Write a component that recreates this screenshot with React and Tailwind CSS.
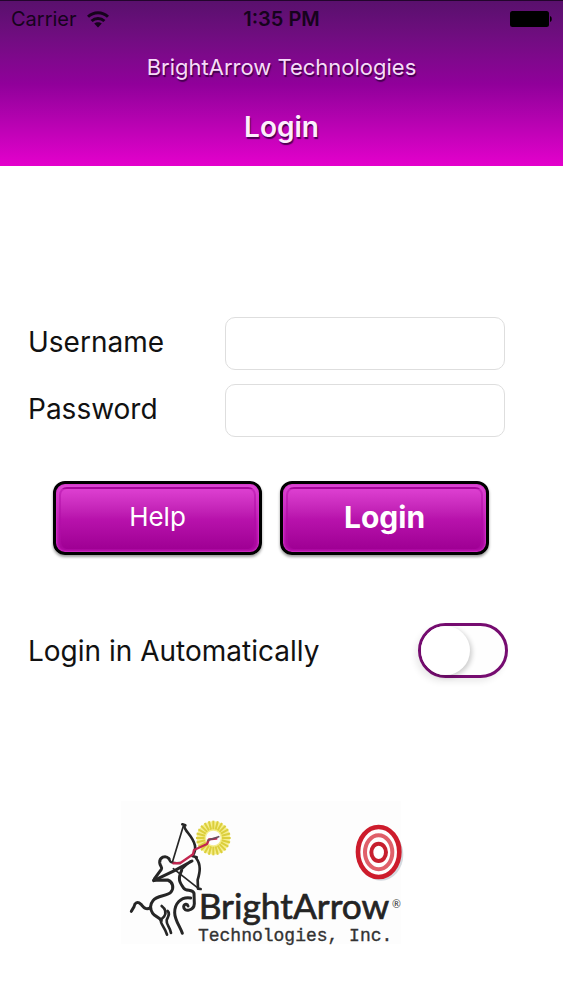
import React, { useState } from "react";

function WifiIcon() {
  return (
    <svg width="22" height="17" viewBox="0 0 22 17" fill="none" stroke="currentColor" strokeWidth="3" aria-hidden="true">
      <path d="M1 5.8C6.6 0.3 15.4 0.3 21 5.8" />
      <path d="M4.6 10C8.2 6.6 13.8 6.6 17.4 10" />
      <path d="M11 16.4L7.2 12.6C9.4 10.7 12.6 10.7 14.8 12.6Z" fill="currentColor" stroke="none" />
    </svg>
  );
}

function BatteryIcon() {
  return (
    <svg width="42" height="17" viewBox="0 0 42 17" fill="currentColor" aria-hidden="true">
      <rect x="0" y="0" width="39" height="16" rx="2.5" />
      <path d="M40 5C42.3 5.5 42.3 10.5 40 11Z" />
    </svg>
  );
}

const RAYS = Array.from({ length: 24 }, (_, i) => (i * Math.PI) / 12);

function Logo() {
  return (
    <svg className="h-auto w-[290px]" viewBox="0 0 870 440" role="img" aria-label="BrightArrow Technologies, Inc.">
      <rect x="3" y="3" width="840" height="430" fill="#fdfdfd" />
      <circle cx="280" cy="114" r="36" fill="none" stroke="#f5ee8e" strokeWidth="28" />
      <g stroke="#dccf3c" strokeWidth="6">
        {RAYS.map((a) => (
          <line
            key={a}
            x1={280 + 26 * Math.cos(a)}
            y1={114 + 26 * Math.sin(a)}
            x2={280 + 52 * Math.cos(a)}
            y2={114 + 52 * Math.sin(a)}
          />
        ))}
      </g>
      <g fill="none" stroke="#262626" strokeLinecap="round" strokeLinejoin="round">
        <path d="M187 73L196 76M192 76C194 96 217 104 225 137C227 149 224 159 217 168L230 172" strokeWidth="8" />
        <path d="M228 174C244 194 240 216 233 240L234 266L242 267" strokeWidth="8" />
        <path d="M190 78L158 184M160 206L236 266" strokeWidth="5" />
        <path d="M147 176C136 164 118 172 119 188C120 199 128 201 124 208L103 237" strokeWidth="9" />
        <path d="M147 176C150 190 163 190 180 189" strokeWidth="7" />
        <path d="M101 242L165 211L216 183" strokeWidth="9" />
        <path d="M101 241L143 240C160 246 162 265 153 276C141 290 112 285 99 302C91 312 89 326 98 340C104 350 118 350 124 362" strokeWidth="9" />
        <path d="M92 323C77 331 72 323 63 313C52 302 44 309 42 320L34 334" strokeWidth="9" />
        <path d="M125 318C138 328 140 338 132 350L123 359C118 369 135 382 141 404" strokeWidth="8" />
        <path d="M143 333C151 340 145 349 140 360C138 375 150 380 153 399" strokeWidth="8" />
        <path d="M185 211C173 237 178 246 190 263C198 277 217 265 222 280L223 311C222 333 191 338 191 320C192 312 202 310 204 318" strokeWidth="9" />
        <path d="M212 294C181 289 164 313 164 338C164 360 181 381 187 400" strokeWidth="9" />
        <path d="M184 209L212 183" strokeWidth="6" />
      </g>
      <g fill="none" strokeLinecap="round" strokeLinejoin="round">
        <path d="M160 190L181 189L219 163L222 150L261 132L267 118L289 116" stroke="#c32750" strokeWidth="7" />
        <path d="M264 121L296 110" stroke="#68505f" strokeWidth="5" />
      </g>
      <g>
        <ellipse cx="783" cy="164" rx="67" ry="78" fill="#b8c1cb" opacity="0.6" />
        <ellipse cx="776" cy="156" rx="62" ry="75" fill="#fff" stroke="#cd1c2c" strokeWidth="14" />
        <ellipse cx="776" cy="157" rx="41" ry="51" fill="none" stroke="#e0606a" strokeWidth="12" />
        <ellipse cx="776" cy="157" rx="22" ry="26" fill="none" stroke="#c71f2e" strokeWidth="12" />
      </g>
      <text x="236" y="356" fontFamily="Lato, sans-serif" fontSize="106" fill="#242424" stroke="#242424" strokeWidth="2">
        BrightArrow
      </text>
      <text x="816" y="324" fontFamily="Lato, sans-serif" fontSize="32" fill="#333">
        ®
      </text>
      <text x="234" y="424" fontFamily="'Liberation Mono', monospace" fontSize="54" fill="#333" stroke="#333" strokeWidth="1">
        Technologies, Inc.
      </text>
    </svg>
  );
}

function GlossyButton({ children, className }) {
  return (
    <button
      type="button"
      className={`h-[74px] rounded-xl border-[3px] border-black bg-linear-to-b from-[#e04ad6] via-[#bd16b1] via-55% to-[#a8069d] p-[3px] text-white shadow-[0_2px_3px_rgba(0,0,0,0.4),inset_0_0_2px_1px_#d633ca] ${className}`}
    >
      <span className="flex h-full items-center justify-center rounded-lg border-2 border-b-0 border-[#b00da6]/50 bg-linear-to-b from-[#dd3fd1] via-[#b812ac] via-50% to-[#9f0094] pb-1">
        {children}
      </span>
    </button>
  );
}

function Field({ id, label, type }) {
  return (
    <div className="flex items-center">
      <label htmlFor={id} className="w-[197px] shrink-0 pb-1">
        {label}
      </label>
      <input
        id={id}
        type={type}
        className="h-[53px] min-w-0 flex-1 rounded-[10px] border border-[#dedede] bg-white px-3 text-2xl outline-none"
      />
    </div>
  );
}

export default function App() {
  const [auto, setAuto] = useState(false);
  return (
    <div className="min-h-screen bg-white font-['Inter',sans-serif] text-[28px] leading-9 text-[#111]">
      <header className="h-[166px] border-t border-[#22052c] bg-linear-to-b from-[#59106d] via-[#90009a] via-50% to-[#e400cc]">
        <div className="grid h-9 grid-cols-3 items-center px-[11px] text-xl text-[#16031c]">
          <div className="flex items-center gap-2.5">
            <span>Carrier</span>
            <WifiIcon />
          </div>
          <span className="text-center font-semibold">1:35 PM</span>
          <span className="justify-self-end text-black">
            <BatteryIcon />
          </span>
        </div>
        <p className="mt-3 text-center text-[22px] text-[#f6dcf8] [text-shadow:1px_2px_1px_rgba(40,0,50,0.75)]">
          BrightArrow Technologies
        </p>
        <h1 className="mt-6 text-center text-[28px] font-semibold text-[#fdeefd] [text-shadow:1px_2px_1px_rgba(40,0,50,0.75)]">
          Login
        </h1>
      </header>
      <form className="pt-[151px]" onSubmit={(e) => e.preventDefault()}>
        <div className="flex flex-col gap-3.5 pr-[58px] pl-7">
          <Field id="username" label="Username" type="text" />
          <Field id="password" label="Password" type="password" />
        </div>
        <div className="mt-11 grid grid-cols-2 gap-[18px] pr-[74px] pl-[53px]">
          <GlossyButton className="text-[26px]">Help</GlossyButton>
          <GlossyButton className="text-[30px] font-bold">Login</GlossyButton>
        </div>
        <div className="mt-[68px] flex items-center justify-between pr-[55px] pl-7">
          <label htmlFor="auto">Login in Automatically</label>
          <input
            id="auto"
            type="checkbox"
            role="switch"
            checked={auto}
            onChange={(e) => setAuto(e.target.checked)}
            className="h-[55px] w-[90px] appearance-none rounded-full border-[3px] border-[#760c70] bg-[#fefefe] shadow-[-3px_4px_6px_rgba(0,0,0,0.08)] before:block before:size-[49px] before:rounded-full before:bg-white before:shadow-[2px_2px_5px_rgba(0,0,0,0.2)] checked:bg-[#b80daa] checked:before:ml-auto"
          />
        </div>
      </form>
      <footer className="mt-[122px] pl-[120px]">
        <Logo />
      </footer>
    </div>
  );
}
